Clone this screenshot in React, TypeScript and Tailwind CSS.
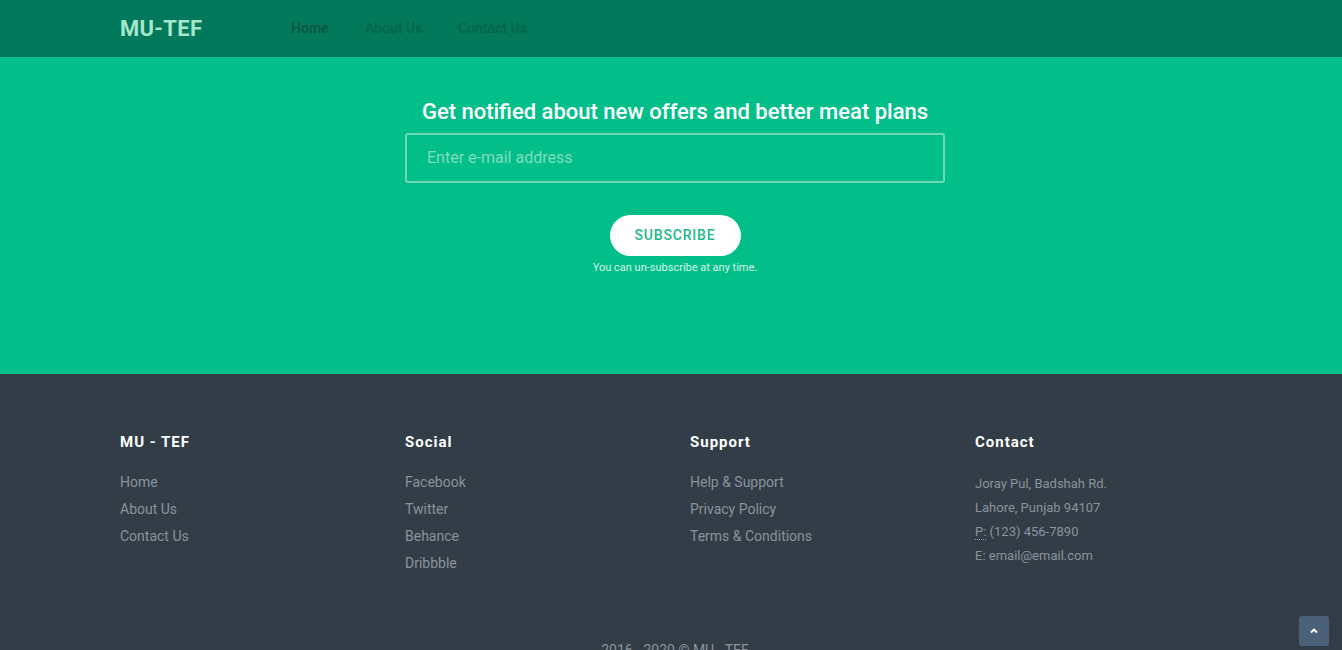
import React from "react";

export default function App() {
  const col = "w-[285px] shrink-0";
  return (
    <div className="min-h-[650px] bg-[#323d47] font-['Roboto',_'Liberation_Sans',_sans-serif] relative">
      <header className="h-[57px] bg-[#01795a] flex items-center">
        <div className="pl-[120px] flex items-center">
          <span className="text-[22px] font-bold text-[#a5e6cd] tracking-[0.3px] w-[171px]">MU-TEF</span>
          <nav className="flex items-center text-[14px] font-medium">
            <span className="text-[#06553f] w-[74px]">Home</span>
            <span className="text-[#066447] w-[93px]">About Us</span>
            <span className="text-[#066447]">Contact Us</span>
          </nav>
        </div>
      </header>
      <section className="h-[317px] bg-[#02bf89] flex flex-col items-center pt-[41px] pl-[8px]">
        <h2 className="text-[22px] font-medium text-white leading-[28px]">Get notified about new offers and better meat plans</h2>
        <div className="mt-[7px] w-[540px] h-[50px] border-2 border-[#6fd9b6] rounded-[3px] flex items-center pl-[20px]">
          <span className="text-[16px] text-[#80dcbd]">Enter e-mail address</span>
        </div>
        <button className="mt-[32px] w-[131px] h-[41px] bg-white rounded-full text-[14px] font-medium text-[#22b98a] tracking-[0.8px]">SUBSCRIBE</button>
        <p className="mt-[4px] text-[11px] text-[#d5f4e8]">You can un-subscribe at any time.</p>
      </section>
      <footer className="pl-[120px] pt-[59px]">
        <div className="flex">
          <div className={col}>
            <h3 className="text-[15px] font-bold text-white tracking-[1px] leading-[18px]">MU - TEF</h3>
            <ul className="mt-[18px] text-[14px] text-[#8a939b] leading-[27px]">
              <li>Home</li>
              <li>About Us</li>
              <li>Contact Us</li>
            </ul>
          </div>
          <div className={col}>
            <h3 className="text-[15px] font-bold text-white tracking-[1px] leading-[18px]">Social</h3>
            <ul className="mt-[18px] text-[14px] text-[#8a939b] leading-[27px]">
              <li>Facebook</li>
              <li>Twitter</li>
              <li>Behance</li>
              <li>Dribbble</li>
            </ul>
          </div>
          <div className={col}>
            <h3 className="text-[15px] font-bold text-white tracking-[1px] leading-[18px]">Support</h3>
            <ul className="mt-[18px] text-[14px] text-[#8a939b] leading-[27px]">
              <li>Help &amp; Support</li>
              <li>Privacy Policy</li>
              <li>Terms &amp; Conditions</li>
            </ul>
          </div>
          <div className={col}>
            <h3 className="text-[15px] font-bold text-white tracking-[1px] leading-[18px]">Contact</h3>
            <div className="mt-[21px] text-[13px] text-[#8a939b] leading-[24px]">
              <div>Joray Pul, Badshah Rd.</div>
              <div>Lahore, Punjab 94107</div>
              <div>
                <abbr className="no-underline border-b border-dotted border-[#8a939b]" title="Phone">P:</abbr> (123) 456-7890
              </div>
              <div>E: email@email.com</div>
            </div>
          </div>
        </div>
      </footer>
      <div className="absolute left-0 right-0 top-[640px] pl-[8px] text-center text-[14px] text-[#8a939b]">2016 - 2020 © MU - TEF</div>
      <button className="absolute left-[1299px] top-[616px] w-[30px] h-[30px] rounded-[3px] bg-[#4b6179] flex items-center justify-center">
        <svg width="10" height="10" viewBox="0 0 10 10" fill="none" stroke="white" strokeWidth="1.8">
          <path d="M2 6.5 L5 3.5 L8 6.5" />
        </svg>
      </button>
    </div>
  );
}
